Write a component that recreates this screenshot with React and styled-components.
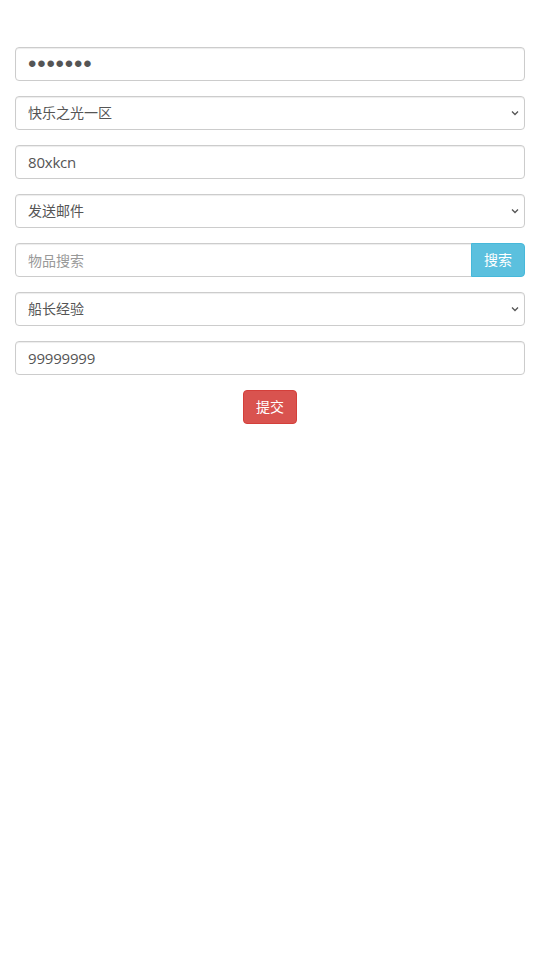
import styled, { createGlobalStyle } from "styled-components";

const GlobalStyle = createGlobalStyle`
  * { box-sizing: border-box; }
  body {
    margin: 0;
    background: #fff;
    font-family: "Open Sans", "Noto Sans CJK SC", sans-serif;
    color: #333;
  }
`;

const Form = styled.form`
  display: flex;
  flex-direction: column;
  gap: 15px;
  padding: 47px 15px 0 15px;
`;

const Field = styled.input`
  width: 100%;
  height: 34px;
  padding: 6px 12px;
  border: 1px solid #ccc;
  border-radius: 4px;
  font-family: ${(p) =>
    p.type === "password"
      ? `"Liberation Sans", sans-serif`
      : `"Open Sans", "Noto Sans CJK SC", sans-serif`};
  font-size: ${(p) => (p.type === "password" ? "24px" : "15px")};
  letter-spacing: ${(p) => (p.type === "password" ? "0.8px" : "-0.2px")};
  color: #555;
  background: #fff;
  box-shadow: inset 0 1px 1px rgba(0, 0, 0, 0.075);
  outline: none;

  &::placeholder {
    color: #999;
    font-size: 14px;
    letter-spacing: 0;
  }
`;

const SelectWrap = styled.div`
  position: relative;
  width: 100%;

  svg {
    position: absolute;
    right: 6px;
    top: 14px;
    pointer-events: none;
  }
`;

const Select = styled.select`
  width: 100%;
  height: 34px;
  padding: 5px 12px 7px;
  border: 1px solid #ccc;
  border-radius: 4px;
  font-family: "Open Sans", "Noto Sans CJK SC", sans-serif;
  font-size: 14px;
  color: #555;
  background: #fff;
  box-shadow: inset 0 1px 1px rgba(0, 0, 0, 0.075);
  outline: none;
  appearance: none;
`;

const Group = styled.div`
  display: flex;
  width: 100%;

  ${Field} {
    border-radius: 4px 0 0 4px;
    flex: 1;
  }
`;

const Button = styled.button`
  height: 34px;
  padding: 6px 12px;
  border: 1px solid ${(p) => (p.$danger ? "#d43f3a" : "#46b8da")};
  background: ${(p) => (p.$danger ? "#d9534f" : "#5bc0de")};
  color: #fff;
  font-family: "Open Sans", "Noto Sans CJK SC", sans-serif;
  font-size: 14px;
  line-height: 20px;
  border-radius: ${(p) => (p.$attached ? "0 4px 4px 0" : "4px")};
  margin-left: ${(p) => (p.$attached ? "-1px" : "0")};
  cursor: pointer;
`;

const Center = styled.div`
  display: flex;
  justify-content: center;
`;

function Chevron() {
  return (
    <svg width="8" height="6" viewBox="0 0 8 6">
      <path d="M1 1.5 L4 4.5 L7 1.5" fill="none" stroke="#555" strokeWidth="1.3" />
    </svg>
  );
}

function Dropdown({ value, label }) {
  return (
    <SelectWrap>
      <Select defaultValue={value}>
        <option value={value}>{label}</option>
      </Select>
      <Chevron />
    </SelectWrap>
  );
}

export default function App() {
  return (
    <>
      <GlobalStyle />
      <Form onSubmit={(e) => e.preventDefault()}>
        <Field type="password" defaultValue="1234567" />
        <Dropdown value="1" label="快乐之光一区" />
        <Field type="text" defaultValue="80xkcn" />
        <Dropdown value="mail" label="发送邮件" />
        <Group>
          <Field type="text" placeholder="物品搜索" />
          <Button type="button" $attached>搜索</Button>
        </Group>
        <Dropdown value="exp" label="船长经验" />
        <Field type="text" defaultValue="99999999" />
        <Center>
          <Button type="submit" $danger>提交</Button>
        </Center>
      </Form>
    </>
  );
}
